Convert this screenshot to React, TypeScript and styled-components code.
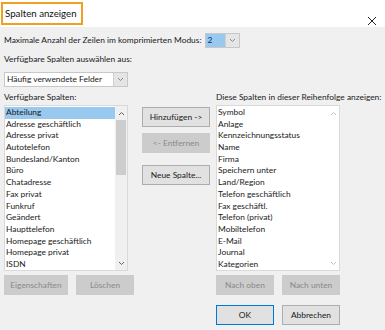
import React from 'react'
import styled, { createGlobalStyle } from 'styled-components'

const GlobalStyle = createGlobalStyle`
  html, body {
    margin: 0;
    padding: 0;
    background: #f0f0f0;
  }
  body {
    font-family: Lato, "Noto Sans", sans-serif;
    color: #1a1a1a;
  }
`

const Dialog = styled.div`
  width: 385px;
  height: 330px;
  background: #f0f0f0;
  display: flex;
  flex-direction: column;
  overflow: hidden;
`

const TitleBar = styled.div`
  height: 27px;
  background: #fff;
  display: flex;
  align-items: center;
  justify-content: space-between;
  padding: 0 8px 0 1px;
  box-sizing: border-box;
`

const Title = styled.div`
  border: 2px solid #f0a020;
  padding: 3px 4px 3px 2px;
  font-size: 9.7px;
  line-height: 13px;
  color: #111;
`

const Close = styled.div`
  width: 10px;
  height: 10px;
  margin-top: 2px;
`

const Body = styled.div`
  padding: 6px 0 0 4px;
  display: flex;
  flex-direction: column;
  font-size: 8.4px;
`

const Row = styled.div`
  display: flex;
  align-items: center;
  gap: 3px;
  height: 15px;
`

const Label = styled.div<{ $mt?: number }>`
  line-height: 11px;
  margin-top: ${(p) => p.$mt ?? 0}px;
  white-space: nowrap;
`

const Combo = styled.div<{ $w: number; $mt?: number }>`
  width: ${(p) => p.$w}px;
  height: 15px;
  margin-top: ${(p) => p.$mt ?? 0}px;
  box-sizing: border-box;
  border: 1px solid #c8c8c8;
  background: #fff;
  display: flex;
  align-items: stretch;
`

const ComboField = styled.div<{ $selected?: boolean }>`
  flex: 1;
  background: ${(p) => (p.$selected ? '#99c9ef' : '#fff')};
  color: ${(p) => (p.$selected ? '#0a2a6a' : '#1a1a1a')};
  padding-left: 2px;
  line-height: 13px;
  white-space: nowrap;
  overflow: hidden;
`

const ComboButton = styled.div`
  width: 13px;
  background: #e5e5e5;
  border-left: 1px solid #d0d0d0;
  display: flex;
  align-items: center;
  justify-content: center;
`

const Columns = styled.div`
  display: flex;
  margin-top: 5px;
`

const Side = styled.div`
  width: 124px;
  flex-shrink: 0;
  display: flex;
  flex-direction: column;
`

const Middle = styled.div`
  width: 68px;
  flex-shrink: 0;
  margin: 0 6px 0 14px;
  display: flex;
  flex-direction: column;
  gap: 6px;
  padding-top: 15px;
`

const ListBox = styled.div`
  margin-top: 2px;
  height: 166px;
  box-sizing: border-box;
  border: 1px solid #d9d9d9;
  background: #fff;
  display: flex;
`

const Items = styled.div`
  flex: 1;
  padding-top: 1px;
  overflow: hidden;
`

const Item = styled.div<{ $selected?: boolean }>`
  height: 11.7px;
  line-height: 11.7px;
  padding-left: 1px;
  background: ${(p) => (p.$selected ? '#99c9ef' : 'transparent')};
  white-space: nowrap;
`

const ScrollBar = styled.div<{ $bg: string }>`
  width: 12px;
  background: ${(p) => p.$bg};
  display: flex;
  flex-direction: column;
`

const Arrow = styled.div`
  height: 14px;
  display: flex;
  align-items: center;
  justify-content: center;
`

const Track = styled.div`
  flex: 1;
  display: flex;
  flex-direction: column;
  padding: 0 1px;
`

const Thumb = styled.div`
  height: 55px;
  background: #cdcdcd;
`

const ButtonRow = styled.div`
  display: flex;
  gap: 8px;
  margin-top: 4px;
`

const Button = styled.div<{ $w: number; $disabled?: boolean; $default?: boolean; $mt?: number }>`
  width: ${(p) => p.$w}px;
  height: 20px;
  margin-top: ${(p) => p.$mt ?? 0}px;
  flex-shrink: 0;
  box-sizing: border-box;
  border: 1px solid
    ${(p) => (p.$default ? '#0078d7' : p.$disabled ? '#cccccc' : '#adadad')};
  background: ${(p) => (p.$disabled ? '#cccccc' : '#e1e1e1')};
  color: ${(p) => (p.$disabled ? '#8a8a8a' : '#1a1a1a')};
  display: flex;
  align-items: center;
  justify-content: center;
  white-space: nowrap;
`

const Footer = styled.div`
  display: flex;
  gap: 8px;
  margin-top: 10px;
`

const Chevron = ({ up, color = '#606060' }: { up?: boolean; color?: string }) => (
  <svg width="7" height="5" viewBox="0 0 7 5">
    <path
      d={up ? 'M1 4 L3.5 1.5 L6 4' : 'M1 1 L3.5 3.5 L6 1'}
      fill="none"
      stroke={color}
      strokeWidth="1"
    />
  </svg>
)

const available = [
  'Abteilung',
  'Adresse geschäftlich',
  'Adresse privat',
  'Autotelefon',
  'Bundesland/Kanton',
  'Büro',
  'Chatadresse',
  'Fax privat',
  'Funkruf',
  'Geändert',
  'Haupttelefon',
  'Homepage geschäftlich',
  'Homepage privat',
  'ISDN',
]

const shown = [
  'Symbol',
  'Anlage',
  'Kennzeichnungsstatus',
  'Name',
  'Firma',
  'Speichern unter',
  'Land/Region',
  'Telefon geschäftlich',
  'Fax geschäftl.',
  'Telefon (privat)',
  'Mobiltelefon',
  'E-Mail',
  'Journal',
  'Kategorien',
]

export default function App() {
  return (
    <Dialog>
      <GlobalStyle />
      <TitleBar>
        <Title>Spalten anzeigen</Title>
        <Close>
          <svg width="10" height="10" viewBox="0 0 10 10">
            <path d="M1 1 L9 9 M9 1 L1 9" stroke="#222" strokeWidth="1" />
          </svg>
        </Close>
      </TitleBar>
      <Body>
        <Row>
          <Label>Maximale Anzahl der Zeilen im komprimierten Modus:</Label>
          <Combo $w={35}>
            <ComboField $selected>2</ComboField>
            <ComboButton>
              <Chevron color="#888" />
            </ComboButton>
          </Combo>
        </Row>
        <Label $mt={6}>Verfügbare Spalten auswählen aus:</Label>
        <Combo $w={124} $mt={7}>
          <ComboField>Häufig verwendete Felder</ComboField>
          <ComboButton>
            <Chevron color="#888" />
          </ComboButton>
        </Combo>
        <Columns>
          <Side>
            <Label>Verfügbare Spalten:</Label>
            <ListBox>
              <Items>
                {available.map((name, i) => (
                  <Item key={name} $selected={i === 0}>
                    {name}
                  </Item>
                ))}
              </Items>
              <ScrollBar $bg="#f0f0f0">
                <Arrow>
                  <Chevron up />
                </Arrow>
                <Track>
                  <Thumb />
                </Track>
                <Arrow>
                  <Chevron />
                </Arrow>
              </ScrollBar>
            </ListBox>
            <ButtonRow>
              <Button $w={64} $disabled>
                Eigenschaften
              </Button>
              <Button $w={58} $disabled>
                Löschen
              </Button>
            </ButtonRow>
          </Side>
          <Middle>
            <Button $w={68}>Hinzufügen -&gt;</Button>
            <Button $w={68} $disabled>
              &lt;- Entfernen
            </Button>
            <Button $w={68} $mt={6}>
              Neue Spalte...
            </Button>
          </Middle>
          <Side>
            <Label>Diese Spalten in dieser Reihenfolge anzeigen:</Label>
            <ListBox>
              <Items>
                {shown.map((name) => (
                  <Item key={name}>{name}</Item>
                ))}
              </Items>
              <ScrollBar $bg="#fff">
                <Arrow>
                  <Chevron up color="#c0c0c0" />
                </Arrow>
                <Track />
                <Arrow>
                  <Chevron color="#c0c0c0" />
                </Arrow>
              </ScrollBar>
            </ListBox>
            <ButtonRow>
              <Button $w={58} $disabled>
                Nach oben
              </Button>
              <Button $w={58} $disabled>
                Nach unten
              </Button>
            </ButtonRow>
            <Footer>
              <Button $w={58} $default>
                OK
              </Button>
              <Button $w={58}>Abbrechen</Button>
            </Footer>
          </Side>
        </Columns>
      </Body>
    </Dialog>
  )
}
